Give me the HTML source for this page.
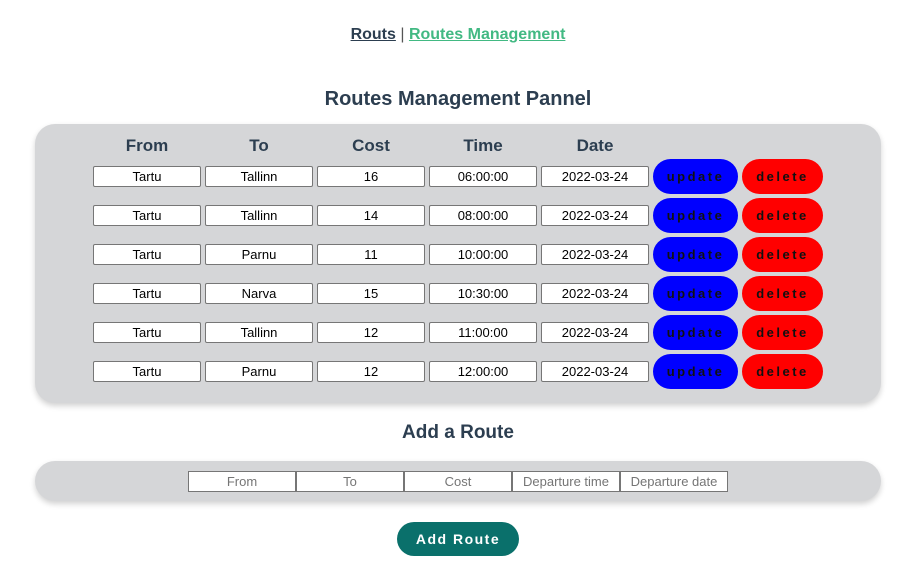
<!DOCTYPE html>
<html><head><style>
body{margin:0;width:906px;height:586px;background:#fff;font-family:"Liberation Sans",Arial,sans-serif;position:relative;overflow:hidden}
.a{position:absolute}
.nav{left:0;width:916px;top:26px;text-align:center;font-weight:bold;font-size:16px;color:#2c3e50}
.nav a{text-decoration:underline}
h2{position:absolute;margin:0;left:0;width:916px;text-align:center;font-size:20px;color:#2c3e50;font-weight:bold}
.panel{position:absolute;background:#d5d6d8;border-radius:20px;box-shadow:0 3px 6px rgba(0,0,0,.18)}
.hd{position:absolute;top:136px;width:108px;text-align:center;font-weight:bold;font-size:17px;color:#2c3e50}
.in{position:absolute;box-sizing:border-box;width:108px;height:21px;background:#fff;border:1px solid #767676;border-radius:2px;text-align:center;font-size:13px;line-height:19px;color:#000}
.btn{position:absolute;height:35px;border-radius:18px;text-align:center;line-height:35px;font-size:13px;font-weight:bold;letter-spacing:2.5px;color:#111}
.ph{color:#757575;font-size:13px;border-radius:0}
</style></head><body>
<div class="a nav"><a>Routs</a> <span style="font-weight:normal;color:#555">|</span> <a style="color:#42b983">Routes Management</a></div>
<h2 style="top:88px">Routes Management Pannel</h2>
<div class="panel" style="left:35px;top:124px;width:846px;height:279px"></div>
<div class="hd" style="left:93px">From</div>
<div class="hd" style="left:205px">To</div>
<div class="hd" style="left:317px">Cost</div>
<div class="hd" style="left:429px">Time</div>
<div class="hd" style="left:541px">Date</div>
<div id="rows"></div>
<h2 style="top:422px;font-size:19px">Add a Route</h2>
<div class="panel" style="left:35px;top:461px;width:846px;height:40px"></div>
<div class="in ph" style="left:188px;top:471px">From</div>
<div class="in ph" style="left:296px;top:471px">To</div>
<div class="in ph" style="left:404px;top:471px">Cost</div>
<div class="in ph" style="left:512px;top:471px">Departure time</div>
<div class="in ph" style="left:620px;top:471px">Departure date</div>
<div class="btn" style="left:397px;top:522px;width:122px;height:34px;line-height:34px;background:#0a706b;color:#fff;letter-spacing:1.5px;font-size:14px">Add Route</div>
<script>
var d=[["Tartu","Tallinn","16","06:00:00"],["Tartu","Tallinn","14","08:00:00"],["Tartu","Parnu","11","10:00:00"],["Tartu","Narva","15","10:30:00"],["Tartu","Tallinn","12","11:00:00"],["Tartu","Parnu","12","12:00:00"]];
var h="";d.forEach(function(r,i){var y=166+i*39;r=r.concat(["2022-03-24"]);
r.forEach(function(v,j){h+='<div class="in" style="left:'+(93+j*112)+'px;top:'+y+'px">'+v+'</div>';});
h+='<div class="btn" style="left:653px;top:'+(y-7)+'px;width:85px;background:#0000ff">update</div>';
h+='<div class="btn" style="left:742px;top:'+(y-7)+'px;width:81px;background:#ff0000">delete</div>';});
document.getElementById("rows").innerHTML=h;
</script>
</body></html>
